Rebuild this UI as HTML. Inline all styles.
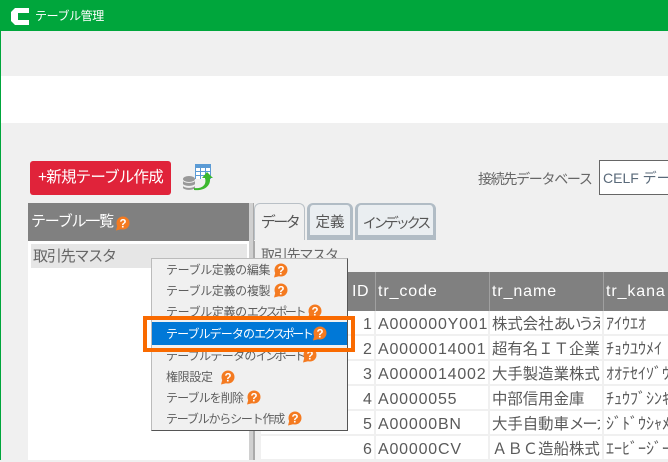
<!DOCTYPE html>
<html lang="ja"><head><meta charset="utf-8"><title>テーブル管理</title>
<style>
html,body{margin:0;padding:0}
body{width:668px;height:460px;overflow:hidden;position:relative;background:#f0f0f0;font-family:"Liberation Sans","Noto Sans CJK JP",sans-serif;color:#5a5a5a}
.a{position:absolute;white-space:nowrap}
.c{position:absolute;white-space:nowrap;font-size:16px;line-height:24px;overflow:hidden}
.n{left:363px}
.d{left:378px;letter-spacing:.8px}
.j{left:492px;width:108px;font-size:15.4px}
.k{left:606px;width:62px;font-size:16px}
.s{letter-spacing:-3px}
.m{position:absolute;left:166px;font-size:12px;line-height:16px;color:#5e5e5e;white-space:nowrap;letter-spacing:-.35px}
.x{letter-spacing:-2.4px}
.h{position:absolute;width:15px;height:15px}
.tab{position:absolute;top:203px;height:37px;box-sizing:border-box;border-radius:6px 6px 0 0;font-size:14px;line-height:37px;text-align:center;color:#555;white-space:nowrap;overflow:hidden}
.t2{background:#eaeef1;border:2px solid #b1bcc5;border-width:2px 3px 5px;line-height:37px}
.ln{position:absolute;left:261px;width:407px;height:2px;background:#f0f0f0}
.v{position:absolute;top:311px;width:2px;height:149px;background:#f0f0f0}
.th{position:absolute;top:280px;font-size:16px;line-height:24px;color:#fff;letter-spacing:.9px;white-space:nowrap}
</style></head><body>
<svg width="0" height="0" style="position:absolute"><defs>
<g id="q"><circle cx="8" cy="7" r="6.5" fill="#f47a20"/><path d="M2.500 9 L1 14.500 L7 13Z" fill="#f47a20"/><text x="8" y="11.300" font-size="11.500" font-weight="700" text-anchor="middle" fill="#fff" font-family="Liberation Sans">?</text></g>
</defs></svg>

<div class="a" style="left:0;top:31px;width:1px;height:429px;background:#00a63c;z-index:5"></div>
<div class="a" style="left:0;top:0;width:668px;height:31px;background:#00a63c"></div>
<svg class="a" style="left:11px;top:8px" width="18" height="17" viewBox="0 0 18 17"><path d="M4 0H18V5H7V12H18V17H4L0 13V4Z" fill="#fff"/></svg>
<div class="a" style="left:35px;top:7px;font-size:12px;line-height:18px;color:#fff;letter-spacing:-.4px">テーブル管理</div>
<div class="a" style="left:1px;top:76px;width:667px;height:47px;background:#fff"></div>

<div class="a" style="left:30px;top:161px;width:141px;height:34px;background:#e0233a;border-radius:3px;color:#fff;font-size:15.500px;line-height:34px;text-align:center;letter-spacing:-.8px">+新規テーブル作成</div>
<svg class="a" style="left:182px;top:163px" width="32" height="30" viewBox="0 0 32 30">
<rect x="13" y="1" width="16" height="15" fill="#5b9bd5"/>
<g fill="#fff"><rect x="14" y="5" width="4" height="3"/><rect x="19" y="5" width="4" height="3"/><rect x="24" y="5" width="4" height="3"/><rect x="14" y="9" width="4" height="3"/><rect x="19" y="9" width="4" height="3"/><rect x="24" y="9" width="4" height="3"/><rect x="14" y="13" width="4" height="3"/><rect x="19" y="13" width="4" height="3"/><rect x="24" y="13" width="4" height="3"/></g>
<ellipse cx="7" cy="16" rx="6" ry="3" fill="#999"/><path d="M1 18c2 2.500 10 2.500 12 0v3c-2 2.500-10 2.500-12 0z" fill="#999"/><path d="M1 23c2 2.500 10 2.500 12 0v2c-2 2.500-10 2.500-12 0z" fill="#999"/>
<path d="M12 25 C20 26 25 22 23 15 L20 15 L25 9 L31 15 L28 15 C29 24 21 28 12 27Z" fill="#3cb82e"/>
</svg>

<div class="a" style="left:478px;top:169px;font-size:14px;line-height:20px;color:#666;letter-spacing:-1.3px">接続先データベース</div>
<div class="a" style="left:599px;top:160px;width:80px;height:35px;box-sizing:border-box;border:1px solid #666;background:#fff;padding-left:3px;font-size:14px;line-height:35px;color:#5a6a7a">CELF データ</div>

<div class="a" style="left:28px;top:203px;width:221px;height:38px;background:#808080;color:#fff;font-size:15px;line-height:38px;padding-left:3px;box-sizing:border-box;letter-spacing:-1.200px">テーブル一覧</div>
<svg class="h" style="left:115px;top:216px"><use href="#q"/></svg>
<div class="a" style="left:28px;top:241px;width:221px;height:219px;background:#fff"></div>
<div class="a" style="left:31px;top:244px;width:216px;height:24px;background:#e6e6e6;font-size:15px;line-height:26px;padding-left:2px;box-sizing:border-box;color:#666;letter-spacing:-1.200px">取引先マスタ</div>
<div class="a" style="left:249px;top:203px;width:4px;height:257px;background:#d0d0d0"></div>
<div class="a" style="left:253px;top:241px;width:2px;height:219px;background:#aaa"></div>
<div class="a" style="left:253px;top:203px;width:1px;height:38px;background:#aaa"></div>

<div class="tab" style="left:254px;width:51px;background:#f0f0f0;border:1px solid #b9c0c6;border-bottom:0;letter-spacing:-2.500px;font-size:15px">データ</div>
<div class="tab t2" style="left:307px;width:46px;font-size:14.500px">定義</div>
<div class="tab t2" style="left:355px;width:81px;letter-spacing:-3px">インデックス</div>
<div class="a" style="left:261px;top:245px;font-size:14px;line-height:20px;color:#666;letter-spacing:-1.200px">取引先マスタ</div>

<div class="a" style="left:261px;top:272px;width:407px;height:39px;background:#808080"></div>
<div class="a" style="left:375px;top:272px;width:1px;height:39px;background:#a0a0a0"></div>
<div class="a" style="left:489px;top:272px;width:1px;height:39px;background:#a0a0a0"></div>
<div class="a" style="left:603px;top:272px;width:1px;height:39px;background:#a0a0a0"></div>
<div class="a" style="left:261px;top:311px;width:407px;height:149px;background:#fff"></div>
<div class="ln" style="top:334px"></div><div class="ln" style="top:359px"></div><div class="ln" style="top:384px"></div><div class="ln" style="top:409px"></div><div class="ln" style="top:434px"></div><div class="ln" style="top:459px"></div>
<div class="v" style="left:374px"></div><div class="v" style="left:488px"></div><div class="v" style="left:602px"></div>

<div class="th" style="left:352px;letter-spacing:.5px">ID</div>
<div class="th" style="left:378px">tr_code</div>
<div class="th" style="left:492px">tr_name</div>
<div class="th" style="left:606px">tr_kana</div>

<div class="c n" style="top:313px">1</div><div class="c d" style="top:313px">A000000Y001</div><div class="c j" style="top:313px">株式会社<span class="s">あいう</span>えお</div><div class="c k" style="top:313px">ｱｲｳｴｵ</div>
<div class="c n" style="top:338px">2</div><div class="c d" style="top:338px">A0000014001</div><div class="c j" style="top:338px">超有名ＩＴ企業株式</div><div class="c k" style="top:338px">ﾁｮｳﾕｳﾒｲ</div>
<div class="c n" style="top:363px">3</div><div class="c d" style="top:363px">A0000014002</div><div class="c j" style="top:363px">大手製造業株式会社</div><div class="c k" style="top:363px">ｵｵﾃｾｲｿﾞｳ</div>
<div class="c n" style="top:388px">4</div><div class="c d" style="top:388px">A0000055</div><div class="c j" style="top:388px">中部信用金庫</div><div class="c k" style="top:388px">ﾁｭｳﾌﾞｼﾝｷﾝ</div>
<div class="c n" style="top:413px">5</div><div class="c d" style="top:413px">A00000BN</div><div class="c j" style="top:413px">大手自動車<span style="letter-spacing:-2px">メーカー</span></div><div class="c k" style="top:413px">ｼﾞﾄﾞｳｼｬﾒ</div>
<div class="c n" style="top:438px">6</div><div class="c d" style="top:438px">A00000CV</div><div class="c j" style="top:438px">ＡＢＣ造船株式会社</div><div class="c k" style="top:438px">ｴｰﾋﾞｰｼﾞｰ</div>

<div class="a" style="left:151px;top:258px;width:197px;height:173px;box-sizing:border-box;background:#f0f0f0;border:1px solid #bbb;border-right-color:#555;border-bottom-color:#555"></div>
<div class="m" style="top:262px">テーブル定義の編集</div><svg class="h" style="left:273px;top:263px"><use href="#q"/></svg>
<div class="m" style="top:283px">テーブル定義の複製</div><svg class="h" style="left:273px;top:283px"><use href="#q"/></svg>
<div class="m" style="top:304px">テーブル定義の<span class="x">エクスポート</span></div><svg class="h" style="left:307px;top:304px"><use href="#q"/></svg>
<div class="a" style="left:152px;top:322px;width:195px;height:23px;background:#0078d7"></div>
<div class="m" style="top:326px;color:#fff;letter-spacing:-.9px">テーブルデータの<span class="x">エクスポート</span></div><svg class="h" style="left:312px;top:326px"><use href="#q"/></svg>
<div class="m" style="top:348px;letter-spacing:-.7px">テーブルデータの<span class="x">インポート</span></div><svg class="h" style="left:302px;top:348px"><use href="#q"/></svg>
<div class="m" style="top:369px">権限設定</div><svg class="h" style="left:220px;top:370px"><use href="#q"/></svg>
<div class="m" style="top:390px;letter-spacing:-.9px">テーブルを削除</div><svg class="h" style="left:246px;top:390px"><use href="#q"/></svg>
<div class="m" style="top:411px;letter-spacing:-1.200px">テーブルからシート作成</div><svg class="h" style="left:287px;top:411px"><use href="#q"/></svg>
<div class="a" style="left:143px;top:316px;width:212px;height:36px;box-sizing:border-box;border:4px solid #f96a00"></div>
</body></html>
